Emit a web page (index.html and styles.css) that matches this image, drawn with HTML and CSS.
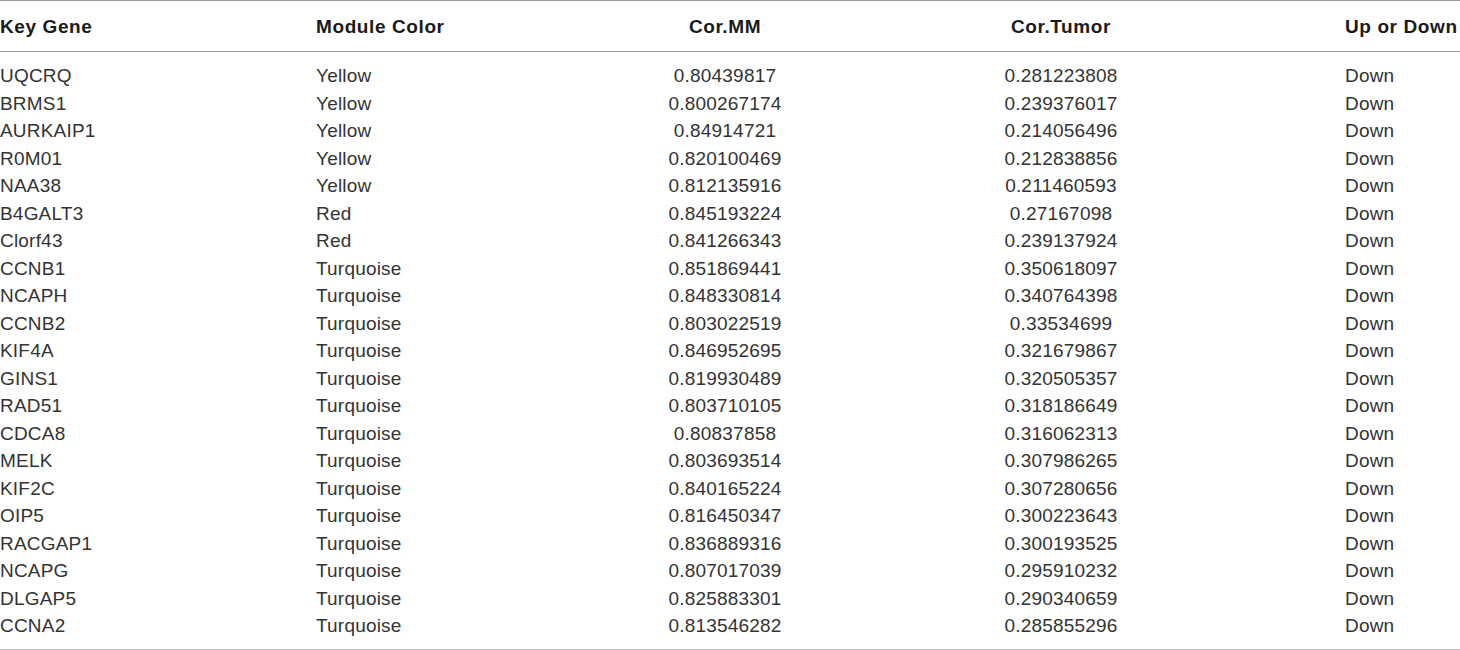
FILE: index.html
```html
<!DOCTYPE html>
<html lang="en">
<head>
<meta charset="utf-8">
<title>Key Genes</title>
<link rel="stylesheet" href="styles.css">
</head>
<body>
<table class="genes">
  <colgroup>
    <col class="c-gene">
    <col class="c-module">
    <col class="c-mm">
    <col class="c-tumor">
    <col class="c-dir">
  </colgroup>
  <thead>
    <tr>
      <th class="left">Key Gene</th>
      <th class="left">Module Color</th>
      <th class="center">Cor.MM</th>
      <th class="center">Cor.Tumor</th>
      <th class="left dir">Up or Down</th>
    </tr>
  </thead>
  <tbody>
    <tr><td>UQCRQ</td><td>Yellow</td><td class="center">0.80439817</td><td class="center">0.281223808</td><td class="dir">Down</td></tr>
    <tr><td>BRMS1</td><td>Yellow</td><td class="center">0.800267174</td><td class="center">0.239376017</td><td class="dir">Down</td></tr>
    <tr><td>AURKAIP1</td><td>Yellow</td><td class="center">0.84914721</td><td class="center">0.214056496</td><td class="dir">Down</td></tr>
    <tr><td>R0M01</td><td>Yellow</td><td class="center">0.820100469</td><td class="center">0.212838856</td><td class="dir">Down</td></tr>
    <tr><td>NAA38</td><td>Yellow</td><td class="center">0.812135916</td><td class="center">0.211460593</td><td class="dir">Down</td></tr>
    <tr><td>B4GALT3</td><td>Red</td><td class="center">0.845193224</td><td class="center">0.27167098</td><td class="dir">Down</td></tr>
    <tr><td>Clorf43</td><td>Red</td><td class="center">0.841266343</td><td class="center">0.239137924</td><td class="dir">Down</td></tr>
    <tr><td>CCNB1</td><td>Turquoise</td><td class="center">0.851869441</td><td class="center">0.350618097</td><td class="dir">Down</td></tr>
    <tr><td>NCAPH</td><td>Turquoise</td><td class="center">0.848330814</td><td class="center">0.340764398</td><td class="dir">Down</td></tr>
    <tr><td>CCNB2</td><td>Turquoise</td><td class="center">0.803022519</td><td class="center">0.33534699</td><td class="dir">Down</td></tr>
    <tr><td>KIF4A</td><td>Turquoise</td><td class="center">0.846952695</td><td class="center">0.321679867</td><td class="dir">Down</td></tr>
    <tr><td>GINS1</td><td>Turquoise</td><td class="center">0.819930489</td><td class="center">0.320505357</td><td class="dir">Down</td></tr>
    <tr><td>RAD51</td><td>Turquoise</td><td class="center">0.803710105</td><td class="center">0.318186649</td><td class="dir">Down</td></tr>
    <tr><td>CDCA8</td><td>Turquoise</td><td class="center">0.80837858</td><td class="center">0.316062313</td><td class="dir">Down</td></tr>
    <tr><td>MELK</td><td>Turquoise</td><td class="center">0.803693514</td><td class="center">0.307986265</td><td class="dir">Down</td></tr>
    <tr><td>KIF2C</td><td>Turquoise</td><td class="center">0.840165224</td><td class="center">0.307280656</td><td class="dir">Down</td></tr>
    <tr><td>OIP5</td><td>Turquoise</td><td class="center">0.816450347</td><td class="center">0.300223643</td><td class="dir">Down</td></tr>
    <tr><td>RACGAP1</td><td>Turquoise</td><td class="center">0.836889316</td><td class="center">0.300193525</td><td class="dir">Down</td></tr>
    <tr><td>NCAPG</td><td>Turquoise</td><td class="center">0.807017039</td><td class="center">0.295910232</td><td class="dir">Down</td></tr>
    <tr><td>DLGAP5</td><td>Turquoise</td><td class="center">0.825883301</td><td class="center">0.290340659</td><td class="dir">Down</td></tr>
    <tr><td>CCNA2</td><td>Turquoise</td><td class="center">0.813546282</td><td class="center">0.285855296</td><td class="dir">Down</td></tr>
  </tbody>
</table>
</body>
</html>
```
FILE: styles.css
```css
html, body {
  margin: 0;
  padding: 0;
  background: #ffffff;
}

.genes {
  width: 1460px;
  border-collapse: collapse;
  table-layout: fixed;
  font-family: "Liberation Sans", Arial, sans-serif;
  border-top: 1px solid #9a9a9a;
  border-bottom: 2px solid #bdbdbd;
}

.c-gene { width: 316px; }
.c-module { width: 254px; }
.c-mm { width: 310px; }
.c-tumor { width: 362px; }
.c-dir { width: 218px; }

.genes th {
  height: 49px;
  padding: 1px 0 0 0;
  font-size: 19px;
  font-weight: bold;
  letter-spacing: 0.6px;
  color: #1a1a1a;
  border-bottom: 1px solid #9a9a9a;
  vertical-align: middle;
  white-space: nowrap;
}

.genes td {
  height: 27.5px;
  line-height: 27.5px;
  padding: 0;
  font-size: 19px;
  letter-spacing: 0.2px;
  color: #333333;
  text-align: left;
  vertical-align: middle;
  white-space: nowrap;
}

.genes tbody tr:first-child td {
  padding-top: 10px;
}

.genes tbody tr:last-child td {
  padding-bottom: 9px;
}

.left { text-align: left; }
.genes .center { text-align: center; }
.genes .dir { padding-left: 103px; }
.genes th.dir { padding-left: 103px; }
```
